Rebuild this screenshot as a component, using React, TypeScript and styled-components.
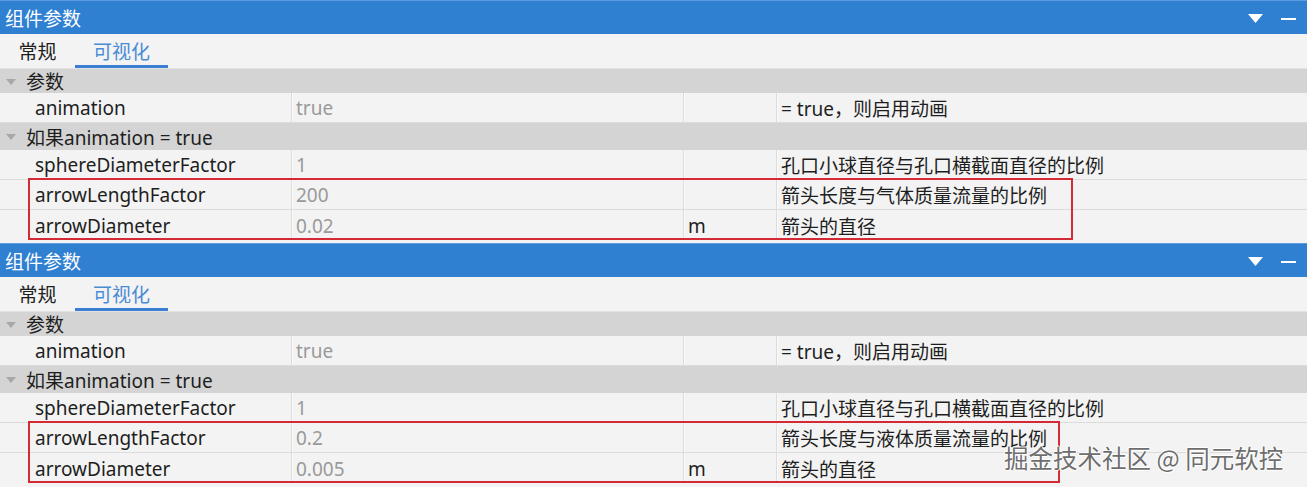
import styled, { createGlobalStyle } from 'styled-components'

const GlobalStyle = createGlobalStyle`
  html, body {
    margin: 0;
    padding: 0;
    background: #f3f3f3;
  }
  body {
    font-family: "Noto Sans", "Noto Sans CJK SC", sans-serif;
    color: #1e1e1e;
  }
`

interface Param {
  name: string
  value: string
  unit?: string
  desc: string
}

interface PanelData {
  length: Param
  diameter: Param
  boxWidth: number
}

const panels: PanelData[] = [
  {
    length: { name: 'arrowLengthFactor', value: '200', desc: '箭头长度与气体质量流量的比例' },
    diameter: { name: 'arrowDiameter', value: '0.02', unit: 'm', desc: '箭头的直径' },
    boxWidth: 1045,
  },
  {
    length: { name: 'arrowLengthFactor', value: '0.2', desc: '箭头长度与液体质量流量的比例' },
    diameter: { name: 'arrowDiameter', value: '0.005', unit: 'm', desc: '箭头的直径' },
    boxWidth: 1032,
  },
]

const ParamRow = ({ p }: { p: Param }) => (
  <Row>
    <NameCell>{p.name}</NameCell>
    <ValueCell>{p.value}</ValueCell>
    <UnitCell>{p.unit}</UnitCell>
    <DescCell>{p.desc}</DescCell>
  </Row>
)

const Panel = ({ data }: { data: PanelData }) => (
  <PanelBox>
    <TitleBar>
      <Title>组件参数</Title>
      <TitleIcons>
        <svg width="15" height="9" viewBox="0 0 15 9">
          <path d="M0 0 H15 L7.5 9 Z" fill="#fff" />
        </svg>
        <Minus />
      </TitleIcons>
    </TitleBar>
    <Tabs>
      <Tab>常规</Tab>
      <Tab active>可视化</Tab>
    </Tabs>
    <Group height={24}>
      <Caret />
      参数
    </Group>
    <ParamRow p={{ name: 'animation', value: 'true', desc: '= true，则启用动画' }} />
    <Group height={27}>
      <Caret />
      如果animation = true
    </Group>
    <ParamRow p={{ name: 'sphereDiameterFactor', value: '1', desc: '孔口小球直径与孔口横截面直径的比例' }} />
    <Highlight boxWidth={data.boxWidth}>
      <ParamRow p={data.length} />
      <ParamRow p={data.diameter} />
    </Highlight>
  </PanelBox>
)

export default function App() {
  return (
    <Page>
      <GlobalStyle />
      {panels.map((d, i) => (
        <Panel data={d} key={i} />
      ))}
      <Watermark>掘金技术社区 @ 同元软控</Watermark>
    </Page>
  )
}

const Page = styled.div`
  position: relative;
  width: 1307px;
  height: 487px;
  overflow: hidden;
  background: #f3f3f3;
`

const PanelBox = styled.div`
  display: flex;
  flex-direction: column;
  margin-bottom: 3px;
`

const TitleBar = styled.div`
  height: 33px;
  display: flex;
  align-items: center;
  justify-content: space-between;
  background: #3080d2;
  border-top: 1px solid #5c9be0;
  padding: 0 11px 0 5px;
`

const Title = styled.span`
  color: #fff;
  font-size: 19px;
`

const TitleIcons = styled.div`
  display: flex;
  align-items: center;
  gap: 18px;
  padding-top: 2px;
`

const Minus = styled.span`
  display: block;
  width: 15px;
  height: 2px;
  background: #fff;
`

const Tabs = styled.div`
  height: 35px;
  display: flex;
  background: #f3f3f3;
  border-bottom: 1px solid #e2e2e2;
  box-sizing: border-box;
`

const Tab = styled.div<{ active?: boolean }>`
  display: flex;
  align-items: center;
  justify-content: center;
  width: ${p => (p.active ? 93 : 75)}px;
  font-size: 19px;
  color: ${p => (p.active ? '#4a8bd6' : '#1e1e1e')};
  border-bottom: 3px solid ${p => (p.active ? '#3a80d2' : 'transparent')};
  box-sizing: border-box;
  padding-top: 2px;
`

const Group = styled.div<{ height: number }>`
  height: ${p => p.height}px;
  display: flex;
  align-items: center;
  gap: 10px;
  padding-left: 6px;
  background: #d4d4d4;
  font-size: 19px;
  color: #1e1e1e;
  box-sizing: border-box;
`

const Caret = styled.span`
  width: 0;
  height: 0;
  border-left: 5px solid transparent;
  border-right: 5px solid transparent;
  border-top: 6px solid #a8a8a8;
  margin-top: 1px;
`

const Row = styled.div`
  display: grid;
  grid-template-columns: 291px 392px 93px 1fr;
  height: 30px;
  box-sizing: border-box;
  border-bottom: 1px solid #dcdcdc;
  background: #f3f3f3;
  font-size: 19px;
  &:last-child {
    border-bottom: none;
  }
`

const Cell = styled.div`
  display: flex;
  align-items: center;
  white-space: nowrap;
  border-left: 1px solid #dcdcdc;
  box-shadow: inset 1px 0 0 #fafafa;
  padding-left: 4px;
  padding-top: 1px;
`

const NameCell = styled(Cell)`
  border-left: none;
  box-shadow: none;
  padding-left: 35px;
  color: #1e1e1e;
`

const ValueCell = styled(Cell)`
  color: #9a9a9a;
`

const UnitCell = styled(Cell)`
  color: #1e1e1e;
`

const DescCell = styled(Cell)`
  color: #1e1e1e;
`

const Highlight = styled.div<{ boxWidth: number }>`
  position: relative;
  display: flex;
  flex-direction: column;
  &::after {
    content: '';
    position: absolute;
    left: 28px;
    top: -2px;
    bottom: 0;
    width: ${p => p.boxWidth}px;
    border: 2px solid #d42a35;
    box-sizing: border-box;
    pointer-events: none;
  }
`

const Watermark = styled.div`
  position: absolute;
  left: 1004px;
  top: 440px;
  font-size: 24.5px;
  color: #6e6e6e;
  font-family: "Noto Sans CJK SC", "Noto Sans", sans-serif;
  text-shadow:
    1px 0 0 #fff,
    -1px 0 0 #fff,
    0 1px 0 #fff,
    0 -1px 0 #fff;
`
